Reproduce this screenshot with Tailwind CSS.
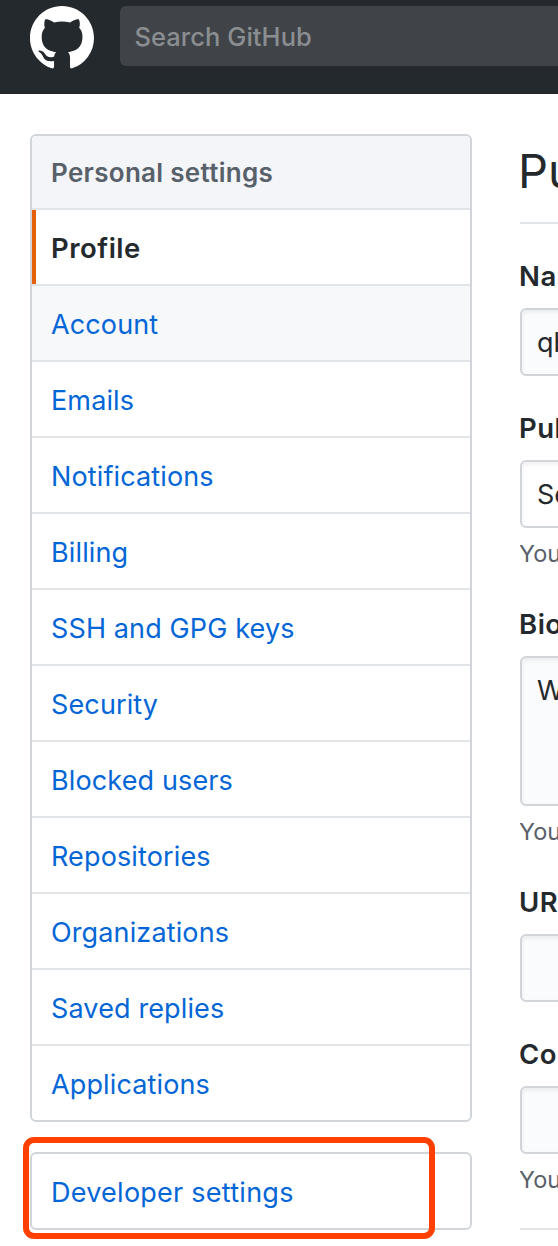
<!DOCTYPE html>
<html lang="en">
<head>
<meta charset="utf-8">
<title>Your Profile</title>
<script src="https://cdn.jsdelivr.net/npm/@tailwindcss/browser@4"></script>
</head>
<body class="h-[1246px] w-[558px] overflow-hidden bg-white font-['Inter',sans-serif] text-[27px] leading-[40px] text-[#24292e]">
<header class="flex h-[94px] items-start bg-[#24292e] pt-[6px] pl-[30px]">
  <svg class="size-16 shrink-0" viewBox="0 0 16 16" fill="#fff"><path fill-rule="evenodd" d="M8 0C3.58 0 0 3.58 0 8c0 3.54 2.29 6.53 5.47 7.59.4.07.55-.17.55-.38 0-.19-.01-.82-.01-1.49-2.01.37-2.53-.49-2.69-.94-.09-.23-.48-.94-.82-1.13-.28-.15-.68-.52-.01-.53.63-.01 1.08.58 1.23.82.72 1.21 1.87.87 2.33.66.07-.52.28-.87.51-1.07-1.78-.2-3.64-.89-3.64-3.95 0-.87.31-1.59.82-2.15-.08-.2-.36-1.02.08-2.12 0 0 .67-.21 2.2.82.64-.18 1.32-.27 2-.27.68 0 1.36.09 2 .27 1.53-1.04 2.2-.82 2.2-.82.44 1.1.16 1.92.08 2.12.51.56.82 1.27.82 2.15 0 3.07-1.87 3.75-3.65 3.95.29.25.54.73.54 1.48 0 1.07-.01 1.93-.01 2.2 0 .21.15.46.55.38A8.013 8.013 0 0 0 16 8c0-4.42-3.58-8-8-8z"/></svg>
  <div class="ml-[26px] flex h-[60px] grow items-center rounded-l-md bg-[#404448] pt-0.5 pl-[14.5px] text-[25.5px] font-medium tracking-[0.05px] text-[#8b8e91]"><span>Search GitHub</span></div>
</header>
<main class="flex items-start whitespace-nowrap pt-[40px] pl-[30px]">
  <div class="w-[442px] shrink-0">
    <nav class="flex flex-col divide-y-2 divide-[#e1e4e8] overflow-hidden rounded-md border-2 border-[#d1d5da] tracking-[0.13px] text-[#0366d6]">
      <h3 class="flex h-[74px] items-center bg-[#f3f5f9] pt-0.5 pl-[19px] text-[26px] font-semibold tracking-[0.3px] text-[#586069]"><span>Personal settings</span></h3>
      <a class="relative flex h-[76px] items-center pt-px pl-[19px] text-[27.5px] font-semibold tracking-[0.5px] text-[#24292e]"><i class="absolute top-0 bottom-0 left-0 w-1 bg-[#e36209]"></i><span>Profile</span></a>
      <a class="flex h-[76px] items-center bg-[#f6f8fa] pt-[3px] pl-[19px]"><span>Account</span></a>
      <a class="flex h-[76px] items-center pt-[3px] pl-[19px]"><span>Emails</span></a>
      <a class="flex h-[76px] items-center pt-[3px] pl-[19px]"><span>Notifications</span></a>
      <a class="flex h-[76px] items-center pt-[3px] pl-[19px]"><span>Billing</span></a>
      <a class="flex h-[76px] items-center pt-[3px] pl-[19px]"><span>SSH and GPG keys</span></a>
      <a class="flex h-[76px] items-center pt-[3px] pl-[19px]"><span>Security</span></a>
      <a class="flex h-[76px] items-center pt-[3px] pl-[19px]"><span>Blocked users</span></a>
      <a class="flex h-[76px] items-center pt-[3px] pl-[19px]"><span>Repositories</span></a>
      <a class="flex h-[76px] items-center pt-[3px] pl-[19px]"><span>Organizations</span></a>
      <a class="flex h-[76px] items-center pt-[3px] pl-[19px]"><span>Saved replies</span></a>
      <a class="flex h-[74px] items-center pt-[3px] pl-[19px]"><span>Applications</span></a>
    </nav>
    <nav class="relative mt-[30px] rounded-md border-2 border-[#d1d5da] tracking-[0.25px] text-[#0366d6]">
      <a class="flex h-[74px] items-center pt-[3px] pl-[19px]"><span>Developer settings</span></a>
      <i class="absolute -top-[17px] -left-[9px] h-[102px] w-[412px] rounded-[11px] border-6 border-[#ff4000]"></i>
    </nav>
  </div>
  <div class="ml-12 min-w-0 grow overflow-hidden">
    <h2 class="h-[90px] w-[600px] border-b-2 border-[#e1e4e8] text-[47px] leading-[73px] -indent-[2px]">Public profile</h2>
    <div class="mt-8 -indent-px text-[27.5px] font-semibold tracking-[0.5px]">Name</div>
    <div class="mt-3 flex h-[68px] w-[600px] items-center rounded-md border-2 border-[#d1d5da] bg-[#fafbfc] pt-0.5 pl-[15px] shadow-[inset_0_2px_4px_rgba(27,31,35,0.075)]">qb</div>
    <div class="mt-8 -indent-px text-[27.5px] font-semibold tracking-[0.5px]">Public email</div>
    <div class="mt-3 flex h-[68px] w-[600px] items-center rounded-md border-2 border-[#d1d5da] bg-white pt-0.5 pl-[15px] shadow-[inset_0_2px_4px_rgba(27,31,35,0.075)]">Select a verified email</div>
    <div class="mt-2 h-9 -indent-px text-[23.5px] leading-9 text-[#586069]">You can manage emails</div>
    <div class="mt-8 -indent-px text-[27.5px] font-semibold tracking-[0.5px]">Bio</div>
    <div class="mt-3 h-[150px] w-[600px] rounded-md border-2 border-[#d1d5da] bg-[#fafbfc] pt-[13px] pl-[15px] shadow-[inset_0_2px_4px_rgba(27,31,35,0.075)]">Web</div>
    <div class="mt-2 h-9 -indent-px text-[23.5px] leading-9 text-[#586069]">You can mention users</div>
    <div class="mt-8 -indent-px text-[27.5px] font-semibold tracking-[0.5px]">URL</div>
    <div class="mt-3 h-[68px] w-[600px] rounded-md border-2 border-[#d1d5da] bg-[#fafbfc] shadow-[inset_0_2px_4px_rgba(27,31,35,0.075)]"></div>
    <div class="mt-8 -indent-px text-[27.5px] font-semibold tracking-[0.5px]">Company</div>
    <div class="mt-3 h-[68px] w-[600px] rounded-md border-2 border-[#d1d5da] bg-[#fafbfc] shadow-[inset_0_2px_4px_rgba(27,31,35,0.075)]"></div>
    <div class="mt-2 h-9 -indent-px text-[23.5px] leading-9 text-[#586069]">You can mention a company</div>
    <div class="mt-[30px] border-t-2 border-[#e1e4e8]"></div>
  </div>
</main>
</body>
</html>
